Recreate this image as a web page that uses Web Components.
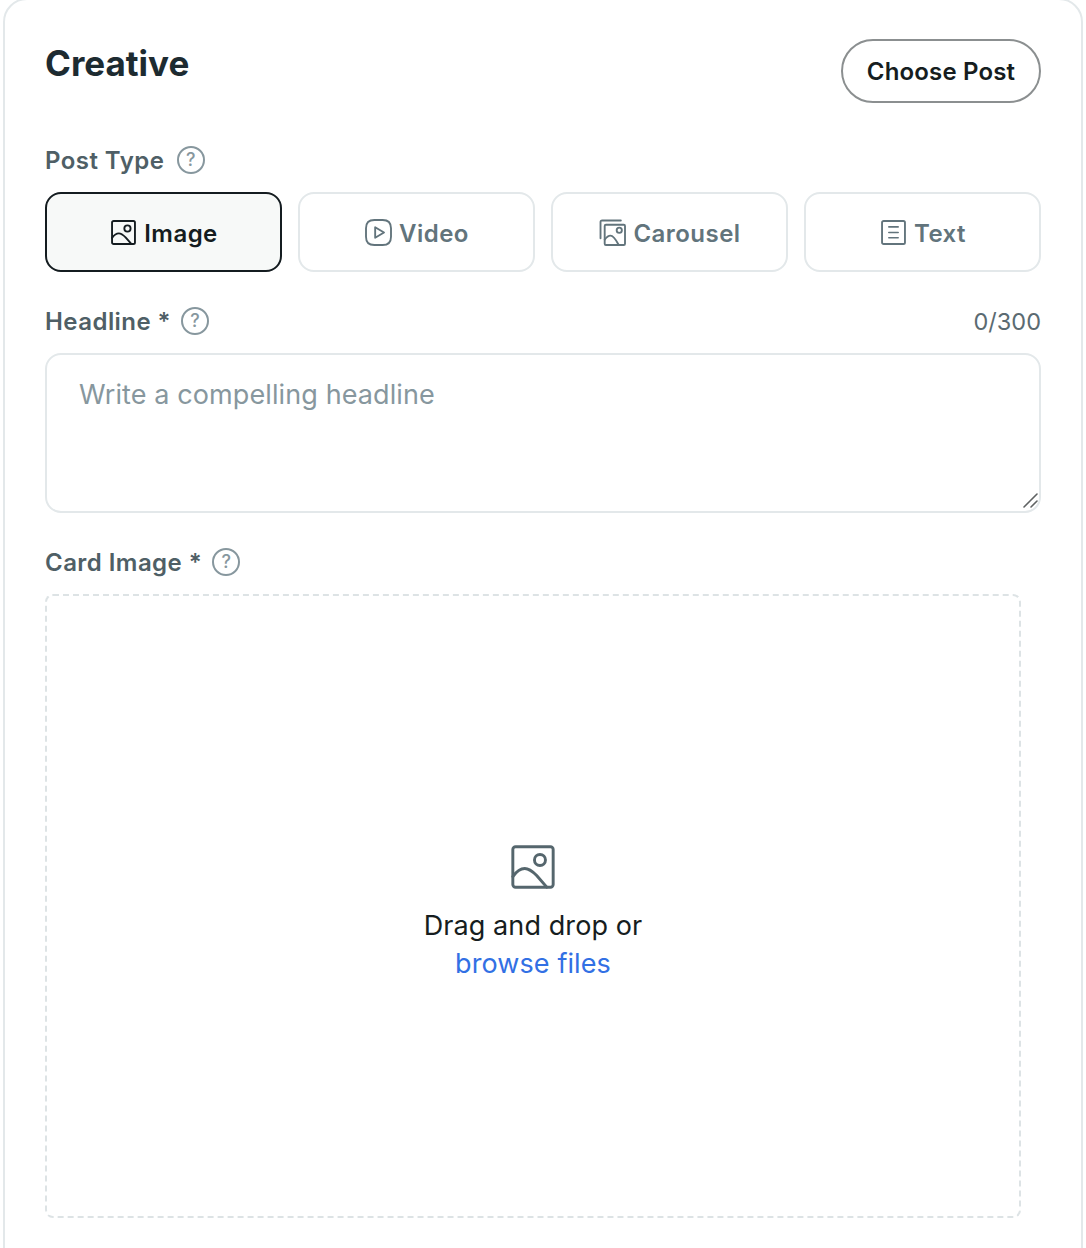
<!DOCTYPE html>
<html>
<head>
<meta charset="utf-8">
<title>Creative</title>
<style>
  html, body { margin: 0; height: 1248px; overflow: hidden; background: #fff; }
  body { font-family: Inter, "Liberation Sans", sans-serif; }
</style>
</head>
<body>
<creative-panel>
  <panel-header slot="header" title="Creative" action="Choose Post"></panel-header>

  <field-label slot="type-label" text="Post Type"></field-label>
  <type-tab slot="tabs" icon="image" active>Image</type-tab>
  <type-tab slot="tabs" icon="video">Video</type-tab>
  <type-tab slot="tabs" icon="carousel">Carousel</type-tab>
  <type-tab slot="tabs" icon="text">Text</type-tab>

  <field-label slot="headline-label" text="Headline *" required count="0/300"></field-label>
  <headline-box slot="headline" placeholder="Write a compelling headline"></headline-box>

  <field-label slot="image-label" text="Card Image *" required></field-label>
  <drop-zone slot="drop"></drop-zone>
</creative-panel>

<script>
const ICONS = {
  image: `<rect x="1" y="1" width="22" height="22" rx="1.5"/><circle cx="15.800" cy="8.200" r="3"/><path d="M1 17.200c2-2.800 4.200-4.400 6.500-4.400 2.500 0 4.500 1.800 6.500 3.800l5.500 6.400"/>`,
  video: `<path d="M8 0h8c5.500 0 8 2.500 8 8v8c0 5.500-2.500 8-8 8H8c-5.500 0-8-2.500-8-8V8c0-5.500 2.500-8 8-8z"/><path d="M8.800 7v10l8.500-5z"/>`,
  carousel: `<path d="M.500 17.500V2C.500 1 1 .500 2 .500h18"/><rect x="4.500" y="4.500" width="19.500" height="19.500" rx="1.200"/><circle cx="18.500" cy="9.800" r="2.500"/><path d="M4.500 18.800c1.800-2.400 3.600-3.800 5.500-3.800 2.200 0 5.500 4.200 8 9"/>`,
  text: `<rect x="1" y="1" width="22" height="22" rx="1.500"/><path d="M7.500 6.600h9M7.500 12h9M7.500 17h9" stroke-width="1.500"/>`
};

customElements.define("help-icon", class extends HTMLElement {
  connectedCallback() {
    this.attachShadow({ mode: "open" }).innerHTML = `
      <style>
        :host { display: inline-flex; width: 28px; height: 28px; box-sizing: border-box; border: 2px solid #87979e;
          border-radius: 50%; align-items: center; justify-content: center; color: #87979e;
          font-size: 18px; font-weight: 500; line-height: 1; }
      </style>?`;
  }
});

customElements.define("panel-header", class extends HTMLElement {
  connectedCallback() {
    this.attachShadow({ mode: "open" }).innerHTML = `
      <style>
        :host { display: flex; justify-content: space-between; align-items: flex-start; }
        h2 { margin: 0; font-size: 35px; line-height: 44px; font-weight: 700; color: #1d2b31; }
        button { box-sizing: border-box; width: 200px; height: 64px; margin-top: -2px; background: #fff; border: 2px solid #8b8f90;
          border-radius: 32px; font: 600 24px Inter, sans-serif; letter-spacing: .15px; color: #161d20; padding: 0; }
      </style>
      <h2>${this.getAttribute("title")}</h2>
      <button>${this.getAttribute("action")}</button>`;
  }
});

customElements.define("field-label", class extends HTMLElement {
  connectedCallback() {
    const count = this.getAttribute("count");
    this.attachShadow({ mode: "open" }).innerHTML = `
      <style>
        :host { display: flex; align-items: center; height: 32px; color: #4f5f66; }
        .name { font-size: 24px; font-weight: 600; letter-spacing: .45px; margin-right: 12.500px; white-space: pre; }
        :host([required]) .name { margin-right: 10px; }
        .count { margin-left: auto; font-size: 23.500px; color: #5b6b72; }
      </style>
      <span class="name">${this.getAttribute("text")}</span>
      <help-icon></help-icon>
      ${count ? `<span class="count">${count}</span>` : ""}`;
  }
});

customElements.define("type-tab", class extends HTMLElement {
  connectedCallback() {
    const icon = ICONS[this.getAttribute("icon")];
    this.attachShadow({ mode: "open" }).innerHTML = `
      <style>
        :host { display: flex; box-sizing: border-box; height: 80px; padding: 2px 0 0 2px; align-items: center; justify-content: center; gap: 8px;
          border: 2px solid #e3e8ea; border-radius: 16px; color: #62747c;
          font-size: 24px; font-weight: 600; letter-spacing: .45px; }
        :host([active]) { border-color: #141c20; background: #f7f9f8; color: #141c20; }
        svg { width: 25px; height: 25px; margin-top: -2px; overflow: visible; fill: none; stroke: currentColor; stroke-width: 1.800; stroke-linejoin: round; stroke-linecap: round; }
      </style>
      <svg viewBox="0 0 24 24">${icon}</svg><slot></slot>`;
  }
});

customElements.define("headline-box", class extends HTMLElement {
  connectedCallback() {
    this.attachShadow({ mode: "open" }).innerHTML = `
      <style>
        :host { display: block; position: relative; box-sizing: border-box; height: 160px; padding: 22px 32px;
          border: 2px solid #e3e8ea; border-radius: 16px; font-size: 27px; line-height: 36px; letter-spacing: .1px; color: #87979e; }
        svg { position: absolute; right: 0; bottom: 2px; width: 16px; height: 16px; stroke: #5f6263; stroke-width: 1.600; stroke-linecap: round; }
      </style>
      ${this.getAttribute("placeholder")}
      <svg viewBox="0 0 16 16"><path d="M1 14 14 1M8 14l6-6"/></svg>`;
  }
});

customElements.define("drop-zone", class extends HTMLElement {
  connectedCallback() {
    this.attachShadow({ mode: "open" }).innerHTML = `
      <style>
        :host { display: flex; flex-direction: column; align-items: center; justify-content: center; box-sizing: border-box;
          width: 976px; height: 624px; border: 2px dashed #dde3e5; border-radius: 8px; font-size: 27px; line-height: 38px;
          letter-spacing: .1px; color: #161d20; text-align: center; padding-top: 16px; }
        svg { width: 44px; height: 44px; margin-bottom: 18px; fill: none; stroke: #55666d; stroke-width: 1.600; stroke-linejoin: round; stroke-linecap: round; }
        a { display: block; color: #3270e4; text-decoration: none; }
      </style>
      <svg viewBox="0 0 24 24">${ICONS.image}</svg>
      <div>Drag and drop or</div>
      <a href="#">browse files</a>`;
  }
});

customElements.define("creative-panel", class extends HTMLElement {
  constructor() {
    super();
    this.shadow = this.attachShadow({ mode: "open" });
  }
  connectedCallback() {
    this.shadow.innerHTML = `
      <style>
        :host { display: block; box-sizing: border-box; width: 1080px; height: 1290px; margin: -2px 0 0 3px; padding: 41px 40px 0;
          border: 2px solid #e3e8ea; border-radius: 24px; background: #fff; }
        .type-label { margin-top: 41px; }
        .tabs { display: grid; grid-template-columns: repeat(4, 1fr); gap: 16px; margin-top: 16px; }
        .headline-label { margin-top: 33px; }
        .headline { margin-top: 16px; }
        .image-label { margin-top: 33px; }
        .drop { margin-top: 16px; }
      </style>
      <slot name="header"></slot>
      <div class="type-label"><slot name="type-label"></slot></div>
      <div class="tabs"><slot name="tabs"></slot></div>
      <div class="headline-label"><slot name="headline-label"></slot></div>
      <div class="headline"><slot name="headline"></slot></div>
      <div class="image-label"><slot name="image-label"></slot></div>
      <div class="drop"><slot name="drop"></slot></div>`;
  }
});
</script>
</body>
</html>
